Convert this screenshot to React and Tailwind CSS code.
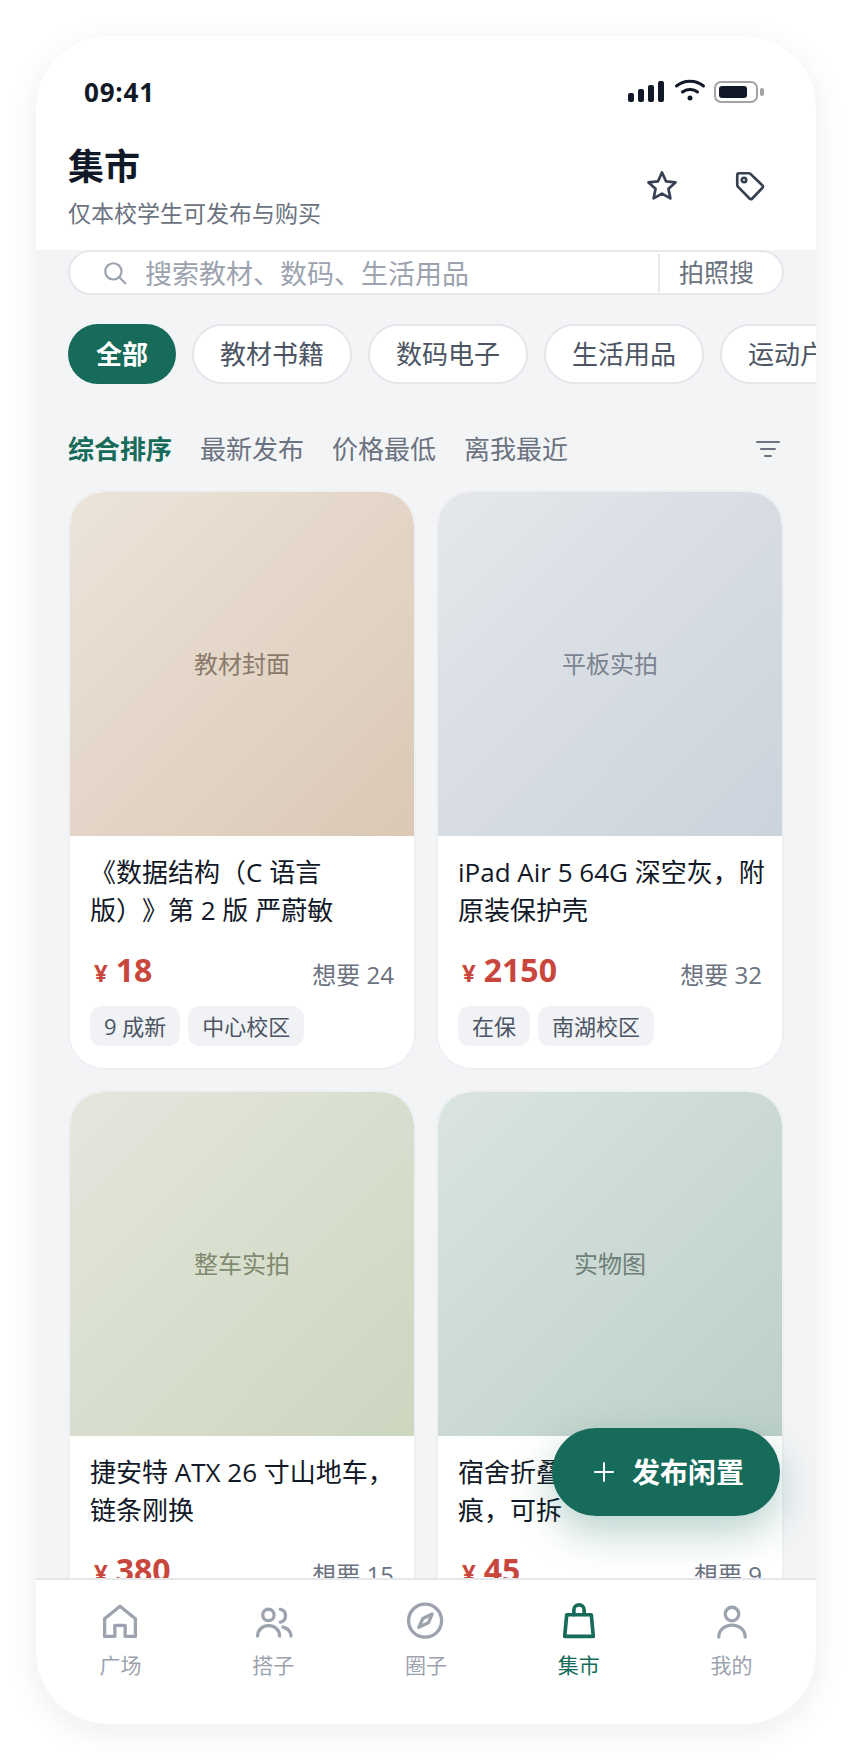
import React from "react";

const font = { fontFamily: '"Open Sans", "Noto Sans CJK SC", sans-serif' };

const chips = ["教材书籍", "数码电子", "生活用品", "运动户外"];
const sorts = ["最新发布", "价格最低", "离我最近"];

const items = [
  {
    cover: "教材封面",
    coverClass: "bg-gradient-to-br from-[#ece4da] to-[#dbc8b5] text-[#8a7a6a]",
    title: "《数据结构（C 语言\n版）》第 2 版 严蔚敏",
    price: "18",
    want: 24,
    tags: ["9 成新", "中心校区"],
  },
  {
    cover: "平板实拍",
    coverClass: "bg-gradient-to-br from-[#e5e7eb] to-[#cbd3dc] text-[#7b8490]",
    title: "iPad Air 5 64G 深空灰，附\n原装保护壳",
    price: "2150",
    want: 32,
    tags: ["在保", "南湖校区"],
  },
  {
    cover: "整车实拍",
    coverClass: "bg-gradient-to-br from-[#e4e7dd] to-[#cdd6bf] text-[#7f8a6e]",
    title: "捷安特 ATX 26 寸山地车，\n链条刚换",
    price: "380",
    want: 15,
    tags: ["8 成新", "中心校区"],
  },
  {
    cover: "实物图",
    coverClass: "bg-gradient-to-br from-[#dae4e0] to-[#bcd0c8] text-[#6f8079]",
    title: "宿舍折叠桌，轻微使用\n痕，可拆",
    price: "45",
    want: 9,
    tags: ["可议价", "北苑"],
  },
];

const StatusIcons = () => (
  <div className="flex items-center">
    <svg width="36" height="22" viewBox="0 0 36 22" fill="#111827">
      <rect x="0" y="12" width="6" height="9" rx="2" />
      <rect x="10" y="8" width="6" height="13" rx="2" />
      <rect x="20" y="4" width="6" height="17" rx="2" />
      <rect x="30" y="0" width="6" height="21" rx="2" />
    </svg>
    <svg className="ml-[10px] mb-[4px]" width="32" height="24" viewBox="0 0 32 24" fill="none" stroke="#111827" strokeWidth="3" strokeLinecap="round">
      <path d="M2.5 8C10 1.5 22 1.5 29.5 8" />
      <path d="M8.5 14C12.5 10.5 19.5 10.5 23.5 14" />
      <circle cx="16" cy="20" r="2.5" fill="#111827" stroke="none" />
    </svg>
    <div className="ml-[8px] flex items-center">
      <div className="w-[44px] h-[22px] rounded-[7px] border-2 border-[#a3a3a3] p-[3px]">
        <div className="h-full w-[28px] rounded-[3px] bg-[#111827]" />
      </div>
      <div className="ml-[2px] w-[4px] h-[8px] rounded-full bg-[#a3a3a3]" />
    </div>
  </div>
);

const NavItem = ({ label, active, children }) => (
  <div className={`flex-1 flex flex-col items-center ${active ? "text-[#166b5a]" : "text-[#9ca3af]"}`}>
    <div className="w-[44px] h-[44px] flex items-center justify-center">{children}</div>
    <span className="mt-[7px] text-[21px] leading-[30px]">{label}</span>
  </div>
);

const navIcon = {
  width: 44,
  height: 44,
  viewBox: "0 0 24 24",
  fill: "none",
  stroke: "currentColor",
  strokeWidth: 1.8,
  strokeLinejoin: "round",
  strokeLinecap: "round",
};

const Card = ({ item }) => (
  <div className="bg-white rounded-[36px] border-2 border-[#eef0f3] overflow-hidden">
    <div className={`h-[344px] rounded-t-[32px] flex items-center justify-center text-[24px] ${item.coverClass}`}>
      {item.cover}
    </div>
    <div className="px-[20px] pt-[17px] pb-[22px]">
      <div className="h-[77px] text-[26px] leading-[38px] text-[#111827] whitespace-pre [text-spacing-trim:space-all]">{item.title}</div>
      <div className="mt-[18px] flex items-end justify-between h-[44px]">
        <div className="flex items-baseline font-bold text-[#c8463c]">
          <span className="text-[24px] ml-[4px] mr-[8px]">¥</span>
          <span className="text-[32px] leading-[44px]">{item.price}</span>
        </div>
        <span className="text-[24px] leading-[34px] text-[#6b7280]">想要 {item.want}</span>
      </div>
      <div className="mt-[14px] flex gap-[8px]">
        {item.tags.map((tag) => (
          <span key={tag} className="h-[40px] px-[14px] rounded-[12px] bg-[#f0f2f5] text-[22px] leading-[40px] text-[#4b5563]">
            {tag}
          </span>
        ))}
      </div>
    </div>
  </div>
);

export default function App() {
  return (
    <div className="w-[852px] h-[1760px] bg-white p-[36px]" style={font}>
      <div className="relative w-[780px] h-[1688px] rounded-[72px] overflow-hidden bg-[#f3f4f6] flex flex-col shadow-[0_8px_32px_rgba(15,23,42,0.08)]">
        {/* status bar + title */}
        <div className="bg-white h-[214px] shrink-0">
          <div className="flex justify-between items-start pl-[48px] pr-[52px] pt-[41px]">
            <span className="text-[26px] leading-[30px] font-bold text-[#111827] tracking-[0.8px]">09:41</span>
            <div className="mt-[1px]">
              <StatusIcons />
            </div>
          </div>
          <div className="flex justify-between items-start pl-[32px] pr-[48px] mt-[36px]">
            <div>
              <h1 className="text-[36px] leading-[48px] font-bold text-[#111827]">集市</h1>
              <p className="mt-[6px] text-[23px] leading-[32px] text-[#6b7280]">仅本校学生可发布与购买</p>
            </div>
            <div className="flex gap-[52px] pt-[25px] text-[#374151]">
              <svg width="36" height="36" viewBox="0 0 24 24" fill="none" stroke="currentColor" strokeWidth="1.8" strokeLinejoin="round">
                <path d="M12 3l2.7 5.9 6.3.7-4.7 4.3 1.3 6.4L12 17.1l-5.6 3.2 1.3-6.4L3 9.6l6.3-.7z" />
              </svg>
              <svg width="36" height="36" viewBox="0 0 24 24" fill="none" stroke="currentColor" strokeWidth="1.8" strokeLinejoin="round">
                <path d="M3.5 4.8c0-.9.7-1.3 1.3-1.3h6.4c.4 0 .8.1 1.1.4l7.9 7.6c.5.5.5 1.3 0 1.8l-6.7 7c-.5.5-1.3.5-1.8 0L3.9 12.400c-.3-.3-.4-.6-.4-1z" />
                <circle cx="8" cy="8" r="1.5" />
              </svg>
            </div>
          </div>
        </div>

        <div className="flex-1 min-h-0 overflow-hidden px-[32px]">
          {/* search */}
          <div className="h-[45px] rounded-full bg-white border-2 border-[#e5e7eb] flex items-center">
            <svg className="ml-[32px] shrink-0 text-[#9ca3af]" width="26" height="26" viewBox="0 0 24 24" fill="none" stroke="currentColor" strokeWidth="2" strokeLinecap="round">
              <circle cx="10.500" cy="10.500" r="7.500" />
              <path d="M16 16l5.500 5.500" />
            </svg>
            <span className="ml-[17px] pt-[2px] flex-1 text-[27px] leading-[40px] text-[#9ca3af] whitespace-nowrap">搜索教材、数码、生活用品</span>
            <div className="flex items-center h-[38px] border-l-2 border-[#e5e7eb] pl-[19px] pr-[28px] text-[25px] text-[#6b7280]">拍照搜</div>
          </div>

          {/* categories */}
          <div className="mt-[29px] flex gap-[16px] -mr-[32px] overflow-hidden">
            <div className="shrink-0 h-[60px] px-[28px] rounded-full bg-[#166b5a] text-white text-[26px] font-bold leading-[60px]">全部</div>
            {chips.map((chip) => (
              <div key={chip} className="shrink-0 h-[60px] px-[26px] rounded-full bg-white border-2 border-[#e5e7eb] text-[26px] leading-[56px] text-[#4b5563]">
                {chip}
              </div>
            ))}
          </div>

          {/* sort row */}
          <div className="mt-[45px] h-[40px] flex items-center gap-[28px] text-[26px] leading-[40px] text-[#6b7280]">
            <span className="font-bold text-[#166b5a]">综合排序</span>
            {sorts.map((sort) => (
              <span key={sort}>{sort}</span>
            ))}
            <svg className="ml-auto mr-[4px]" width="24" height="18" viewBox="0 0 24 18" fill="none" stroke="currentColor" strokeWidth="2" strokeLinecap="round">
              <path d="M1 2h22M5 9h14M9 16h6" />
            </svg>
          </div>

          {/* listings */}
          <div className="mt-[21px] grid grid-cols-2 gap-[20px]">
            {items.map((item) => (
              <Card key={item.cover} item={item} />
            ))}
          </div>
        </div>

        {/* publish button */}
        <div className="absolute left-[516px] top-[1392px] w-[228px] h-[88px] rounded-full bg-[#166b5a] flex items-center pl-[42px] text-white shadow-[0_16px_40px_rgba(22,107,90,0.3)]">
          <svg width="20" height="20" viewBox="0 0 20 20" fill="none" stroke="currentColor" strokeWidth="2" strokeLinecap="round">
            <path d="M10 1v18M1 10h18" />
          </svg>
          <span className="ml-[18px] text-[28px] font-bold">发布闲置</span>
        </div>

        {/* bottom nav */}
        <div className="shrink-0 h-[146px] bg-white border-t-2 border-[#e5e7eb] px-[8px] pt-[19px] flex">
          <NavItem label="广场">
            <svg {...navIcon}>
              <path d="M3.600 10.800L12 4l8.400 6.800v9.600h-5.600v-6H9.200v6H3.600z" />
            </svg>
          </NavItem>
          <NavItem label="搭子">
            <svg {...navIcon}>
              <circle cx="9.500" cy="8.700" r="3.100" />
              <path d="M3.600 20.200c0-3.400 2.700-5.700 6-5.700s6 2.300 6 5.700" />
              <path d="M16 5.600c1.700.3 2.800 1.700 2.800 3.500s-1.100 3.200-2.800 3.500" />
              <path d="M17.500 15.300c2.500.7 4.300 2.500 4.300 4.900" />
            </svg>
          </NavItem>
          <NavItem label="圈子">
            <svg {...navIcon}>
              <circle cx="11.500" cy="11.800" r="9" />
              <path d="M15.300 8.200l-2 4.800-5.200 2.400 2.200-4.800z" />
            </svg>
          </NavItem>
          <NavItem label="集市" active>
            <svg {...navIcon} strokeWidth={2}>
              <path d="M5.300 8.600h13.400l1.100 11.800H4.200z" />
              <path d="M9.200 8.600V6a2.800 2.800 0 0 1 5.600 0v2.600" />
            </svg>
          </NavItem>
          <NavItem label="我的">
            <svg {...navIcon}>
              <circle cx="12" cy="8.200" r="3.700" />
              <path d="M4.800 20.700c0-3.800 3.200-6.500 7.200-6.500s7.200 2.700 7.200 6.500" />
            </svg>
          </NavItem>
        </div>
      </div>
    </div>
  );
}
